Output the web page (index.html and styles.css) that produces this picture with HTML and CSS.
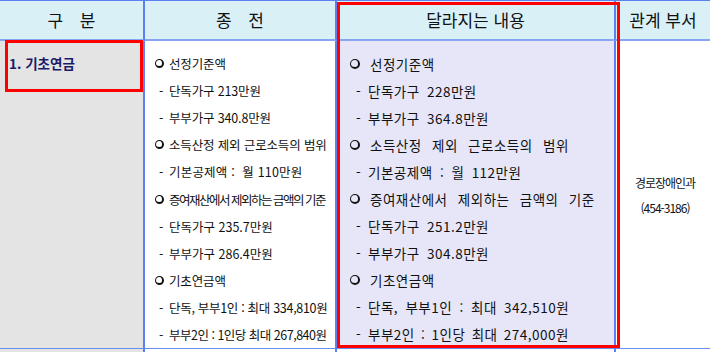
FILE: index.html
```html
<!DOCTYPE html>
<html lang="ko">
<head>
<meta charset="utf-8">
<link rel="stylesheet" href="styles.css">
</head>
<body>
<div class="sheet">
  <div class="grid">
    <div class="hd c1"><span class="spaced">구 분</span></div>
    <div class="hd c2"><span class="spaced">종 전</span></div>
    <div class="hd c3">달라지는 내용</div>
    <div class="hd c4">관계 부서</div>

    <div class="cell c1 cat"><span class="cat-name">1. 기초연금</span></div>

    <div class="cell c2 old">
      <p class="ln bul"><span class="mk"><i class="ring"></i></span><span class="tx">선정기준액</span></p>
      <p class="ln dash"><span class="mk">-</span><span class="tx">단독가구 213만원</span></p>
      <p class="ln dash"><span class="mk">-</span><span class="tx">부부가구 340.8만원</span></p>
      <p class="ln bul"><span class="mk"><i class="ring"></i></span><span class="tx">소득산정 제외 근로소득의 범위</span></p>
      <p class="ln dash"><span class="mk">-</span><span class="tx loose">기본공제액 :&nbsp; 월 110만원</span></p>
      <p class="ln bul"><span class="mk"><i class="ring"></i></span><span class="tx squeeze">증여재산에서 제외하는 금액의 기준</span></p>
      <p class="ln dash"><span class="mk">-</span><span class="tx mid">단독가구 235.7만원</span></p>
      <p class="ln dash"><span class="mk">-</span><span class="tx mid">부부가구 286.4만원</span></p>
      <p class="ln bul"><span class="mk"><i class="ring"></i></span><span class="tx">기초연금액</span></p>
      <p class="ln dash"><span class="mk">-</span><span class="tx snug">단독, 부부1인 : 최대 334,810원</span></p>
      <p class="ln dash"><span class="mk">-</span><span class="tx tight">부부2인 : 1인당 최대 267,840원</span></p>
    </div>

    <div class="cell c3 new">
      <p class="ln bul"><span class="mk"><i class="ring"></i></span><span class="tx">선정기준액</span></p>
      <p class="ln dash"><span class="mk">-</span><span class="tx">단독가구 228만원</span></p>
      <p class="ln dash"><span class="mk">-</span><span class="tx">부부가구 364.8만원</span></p>
      <p class="ln bul"><span class="mk"><i class="ring"></i></span><span class="tx wide">소득산정 제외 근로소득의 범위</span></p>
      <p class="ln dash"><span class="mk">-</span><span class="tx">기본공제액 : 월 112만원</span></p>
      <p class="ln bul"><span class="mk"><i class="ring"></i></span><span class="tx wide">증여재산에서 제외하는 금액의 기준</span></p>
      <p class="ln dash"><span class="mk">-</span><span class="tx">단독가구 251.2만원</span></p>
      <p class="ln dash"><span class="mk">-</span><span class="tx">부부가구 304.8만원</span></p>
      <p class="ln bul"><span class="mk"><i class="ring"></i></span><span class="tx">기초연금액</span></p>
      <p class="ln dash"><span class="mk">-</span><span class="tx">단독, 부부1인 : 최대 342,510원</span></p>
      <p class="ln dash"><span class="mk">-</span><span class="tx narrow">부부2인 : 1인당 최대 274,000원</span></p>
    </div>

    <div class="cell c4 dept">
      <p class="dept-ln">경로장애인과</p>
      <p class="dept-ln">(454-3186)</p>
    </div>

    <div class="next c1"></div>
    <div class="next c2"></div>
    <div class="next c3"></div>
    <div class="next c4"></div>
  </div>
  <div class="mark mark-cat"></div>
  <div class="mark mark-col"></div>
</div>
</body>
</html>
```
FILE: styles.css
```css
* { box-sizing: border-box; }
body {
  margin: 0;
  background: #fff;
  font-family: "Noto Sans CJK KR", "Noto Sans", sans-serif;
  color: #111;
}
p { margin: 0; }

.sheet {
  position: relative;
  width: 710px;
  height: 352px;
  overflow: hidden;
}

.grid {
  display: grid;
  grid-template-columns: 145px 192px 279px 1fr;
  grid-template-rows: 40px 308px 20px;
  border-top: 1px solid #5b80f2;
}

.c1, .c2, .c3 { border-right: 2px solid #5b80f2; }

.hd {
  background: #daf0f7;
  border-bottom: 2px solid #86a6f2;
  display: flex;
  align-items: center;
  justify-content: center;
  font-size: 17px;
  line-height: 1;
  padding-bottom: 2px;
}
.spaced { letter-spacing: 6px; padding-left: 6px; }

.cell { border-bottom: 1px solid #6b8cf2; }
.cell.c1 { background: #e4e4e4; }
.cell.c3 { background: #e6e6f8; }

.cat { padding: 9px 0 0 9px; }
.cat-name {
  display: block;
  font-size: 13.5px;
  font-weight: 700;
  line-height: 27px;
  color: #1b1b6b;
}

.old, .new { padding-top: 9px; }
.ln {
  display: flex;
  align-items: center;
  height: 27.1px;
  white-space: nowrap;
}
.mk { flex: none; display: flex; align-items: center; }
.ring {
  display: block;
  width: 9px;
  height: 9px;
  border: 1.5px solid #111;
  border-right-width: 2.5px;
  border-bottom-width: 2px;
  border-radius: 50%;
}

.old { padding-left: 9px; font-size: 12.5px; }
.old .bul .mk { width: 15px; padding-left: 1px; }
.old .dash .mk { width: 15px; padding-left: 5px; }
.old .tx { letter-spacing: -0.15px; }
.old .tx.loose { letter-spacing: 0.2px; }
.old .tx.squeeze { letter-spacing: -1.5px; }
.old .tx.mid { letter-spacing: 0; }
.old .tx.snug { letter-spacing: -0.3px; }
.old .tx.tight { letter-spacing: -0.5px; }

.new { padding-left: 13px; font-size: 13.5px; }
.new .bul .mk { width: 20px; }
.new .bul .ring { width: 10px; height: 10px; }
.new .dash .mk { width: 18px; padding-left: 6px; }
.new .tx { letter-spacing: 0.5px; word-spacing: 3px; }
.new .tx.wide { word-spacing: 6px; }
.new .tx.narrow { word-spacing: 2px; }

.dept {
  display: flex;
  flex-direction: column;
  justify-content: center;
  align-items: center;
  padding-left: 4px;
  font-size: 12px;
  letter-spacing: -1px;
  line-height: 25px;
}

.next.c1 { background: #e4e4e4; }

.mark {
  position: absolute;
  border: 3px solid #ff0000;
}
.mark-cat { left: 5px; top: 40px; width: 138px; height: 52px; }
.mark-col { left: 337px; top: 2px; width: 283px; height: 346px; }
```
